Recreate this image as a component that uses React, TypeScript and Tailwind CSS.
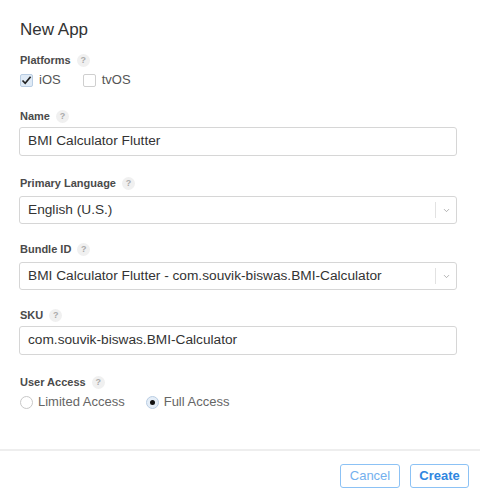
import { ChevronDown } from 'lucide-react';

function Help() {
  return (
    <span className="ml-[6px] inline-flex h-[13px] w-[13px] items-center justify-center rounded-full bg-[#f0f0f0] text-[9px] leading-none text-[#aaa]">
      ?
    </span>
  );
}

function Label({ text, className = '' }: { text: string; className?: string }) {
  return (
    <div className={`flex h-[14px] items-center pl-[1px] text-[11px] font-semibold text-[#4a4a4a] ${className}`}>
      {text}
      <Help />
    </div>
  );
}

function TextField({ value, className = '' }: { value: string; className?: string }) {
  return (
    <div className={`flex h-[29px] w-[438px] items-center rounded-[3px] border border-[#d6d6d6] pl-[8px] text-[13.7px] text-[#333] ${className}`}>
      {value}
    </div>
  );
}

function SelectField({ value, className = '' }: { value: string; className?: string }) {
  return (
    <div className={`flex h-[28px] w-[438px] items-center rounded-[3px] border border-[#d6d6d6] text-[13.7px] text-[#333] ${className}`}>
      <span className="flex-1 pl-[8px]">{value}</span>
      <span className="h-[16px] w-px bg-[#e2e2e2]" />
      <span className="flex w-[20px] items-center justify-center text-[#999]">
        <ChevronDown size={9} strokeWidth={2} />
      </span>
    </div>
  );
}

function Checkbox({ checked, label }: { checked?: boolean; label: string }) {
  return (
    <div className="flex items-center">
      <span
        className={`flex h-[13px] w-[13px] items-center justify-center rounded-[2px] border ${
          checked ? 'border-[#b9cde3] bg-[#dfeaf6]' : 'border-[#cfcfcf] bg-white'
        }`}
      >
        {checked && (
          <svg width="11" height="11" viewBox="0 0 11 11">
            <path d="M1.5 5.5 L4.2 8.3 L9.6 1.8" fill="none" stroke="#222" strokeWidth="1.7" />
          </svg>
        )}
      </span>
      <span className="ml-[6px] text-[13px] text-[#555]">{label}</span>
    </div>
  );
}

function Radio({ checked, label }: { checked?: boolean; label: string }) {
  return (
    <div className="flex items-center">
      <span
        className={`flex h-[13px] w-[13px] items-center justify-center rounded-full border ${
          checked ? 'border-[#b9cde3] bg-[#e4edf7]' : 'border-[#c8c8c8] bg-white'
        }`}
      >
        {checked && <span className="h-[5px] w-[5px] rounded-full bg-[#111]" />}
      </span>
      <span className="ml-[5px] text-[13px] text-[#666]">{label}</span>
    </div>
  );
}

export default function App() {
  return (
    <div className="h-[497px] w-[480px] bg-white font-['Liberation_Sans',Arial,sans-serif]">
      <div className="pl-[19px] pt-[20px]">
        <h1 className="pl-[1px] text-[17px] leading-[20px] text-[#333]">New App</h1>

        <Label text="Platforms" className="mt-[13px]" />
        <div className="mt-[5px] flex h-[16px] items-center gap-[22px] pl-[1px]">
          <Checkbox checked label="iOS" />
          <Checkbox label="tvOS" />
        </div>

        <Label text="Name" className="mt-[21px]" />
        <TextField value="BMI Calculator Flutter" className="mt-[4px]" />

        <Label text="Primary Language" className="mt-[20px]" />
        <SelectField value="English (U.S.)" className="mt-[6px]" />

        <Label text="Bundle ID" className="mt-[18px]" />
        <SelectField value="BMI Calculator Flutter - com.souvik-biswas.BMI-Calculator" className="mt-[6px]" />

        <Label text="SKU" className="mt-[18px]" />
        <TextField value="com.souvik-biswas.BMI-Calculator" className="mt-[4px]" />

        <Label text="User Access" className="mt-[20px]" />
        <div className="mt-[5px] flex h-[16px] items-center gap-[21px] pl-[1px]">
          <Radio label="Limited Access" />
          <Radio checked label="Full Access" />
        </div>
      </div>

      <div className="mt-[39px] h-[2px] w-full bg-[#eeeeee]" />

      <div className="flex justify-end gap-[10px] pr-[11px] pt-[13px]">
        <button className="h-[24px] w-[60px] rounded-[3px] border border-[#8cc2f5] text-[13px] text-[#74b0ee]">
          Cancel
        </button>
        <button className="h-[24px] w-[59px] rounded-[3px] border border-[#8cc2f5] text-[13px] font-bold text-[#2f86e0]">
          Create
        </button>
      </div>
    </div>
  );
}
